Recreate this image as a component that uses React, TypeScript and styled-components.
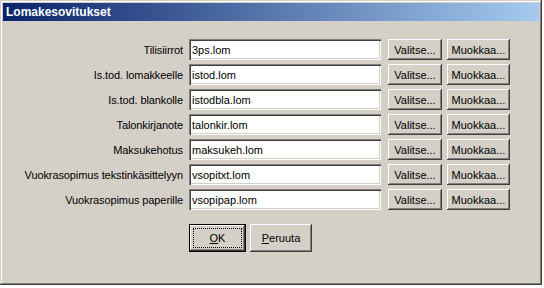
import { Fragment } from "react";
import styled, { createGlobalStyle } from "styled-components";

const GlobalStyle = createGlobalStyle`
  html, body {
    margin: 0;
    padding: 0;
    background: #ffffff;
  }
  body {
    font-family: "Liberation Sans", Arial, sans-serif;
    font-size: 11px;
    color: #000;
  }
`;

const Window = styled.div`
  width: 542px;
  height: 285px;
  box-sizing: border-box;
  padding: 3px;
  background: #d4d0c8;
  box-shadow: inset -1px -1px #404040, inset 1px 1px #d4d0c8,
    inset -2px -2px #808080, inset 2px 2px #ffffff;
  display: flex;
  flex-direction: column;
`;

const TitleBar = styled.div`
  height: 18px;
  display: flex;
  align-items: center;
  padding-left: 3px;
  background: linear-gradient(90deg, #0a246a, #a6caf0);
  color: #ffffff;
  font-weight: bold;
  font-size: 12px;
`;

const Form = styled.div`
  display: grid;
  grid-template-columns: 180px 192px 55px 62px;
  grid-auto-rows: 21px;
  row-gap: 4px;
  column-gap: 6px;
  margin-top: 18px;
`;

const Label = styled.div`
  display: flex;
  align-items: center;
  justify-content: flex-end;
  letter-spacing: -0.1px;
`;

const Field = styled.div`
  display: flex;
  align-items: center;
  padding-left: 3px;
  background: #ffffff;
  box-shadow: inset 1px 1px #808080, inset 2px 2px #404040,
    inset -1px -1px #ffffff, inset -2px -2px #d4d0c8;
`;

const Button = styled.div<{ $first?: boolean }>`
  display: flex;
  align-items: center;
  justify-content: center;
  margin-left: ${(p) => (p.$first ? "1px" : "-1px")};
  background: #d4d0c8;
  box-shadow: inset -1px -1px #404040, inset 1px 1px #ffffff,
    inset -2px -2px #808080, inset 2px 2px #d4d0c8;
`;

const Actions = styled.div`
  display: flex;
  gap: 4px;
  margin: 14px 0 0 186px;
`;

const DialogButton = styled.div<{ $width: number; $default?: boolean }>`
  width: ${(p) => p.$width}px;
  height: 28px;
  box-sizing: border-box;
  display: flex;
  align-items: center;
  justify-content: center;
  background: #d4d0c8;
  position: relative;
  ${(p) =>
    p.$default
      ? `box-shadow: inset 0 0 0 1px #000, inset -2px -2px #404040, inset 2px 2px #ffffff,
    inset -3px -3px #808080, inset 3px 3px #d4d0c8;`
      : `box-shadow: inset -1px -1px #404040, inset 1px 1px #ffffff,
    inset -2px -2px #808080, inset 2px 2px #d4d0c8;`}
`;

const FocusRing = styled.span`
  position: absolute;
  inset: 4px;
  border: 1px dotted #000;
`;

const rows = [
  ["Tilisiirrot", "3ps.lom"],
  ["Is.tod. lomakkeelle", "istod.lom"],
  ["Is.tod. blankolle", "istodbla.lom"],
  ["Talonkirjanote", "talonkir.lom"],
  ["Maksukehotus", "maksukeh.lom"],
  ["Vuokrasopimus tekstinkäsittelyyn", "vsopitxt.lom"],
  ["Vuokrasopimus paperille", "vsopipap.lom"],
];

export default function App() {
  return (
    <>
      <GlobalStyle />
      <Window>
        <TitleBar>Lomakesovitukset</TitleBar>
        <Form>
          {rows.map(([label, file]) => (
            <Fragment key={label}>
              <Label>{label}</Label>
              <Field>{file}</Field>
              <Button $first>Valitse...</Button>
              <Button>Muokkaa...</Button>
            </Fragment>
          ))}
        </Form>
        <Actions>
          <DialogButton $width={57} $default>
            <FocusRing />
            <u>O</u>K
          </DialogButton>
          <DialogButton $width={62}>
            <span>
              <u>P</u>eruuta
            </span>
          </DialogButton>
        </Actions>
      </Window>
    </>
  );
}
